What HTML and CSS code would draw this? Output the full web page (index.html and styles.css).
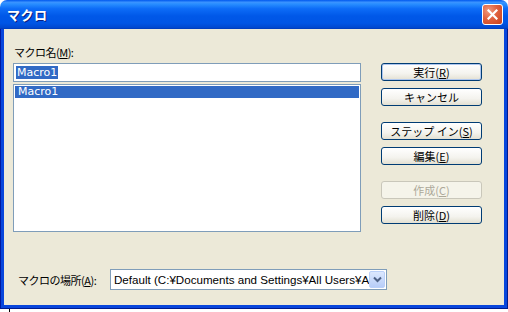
FILE: index.html
```html
<!DOCTYPE html>
<html lang="ja">
<head>
    <meta charset="UTF-8">
    <title>マクロ</title>
    <link rel="stylesheet" href="styles.css">
</head>
<body>
    <div class="window">
        <div class="titlebar">
            <span class="title">マクロ</span>
            <button class="close-btn" aria-label="閉じる">
                <svg width="11" height="11" viewBox="0 0 11 11">
                    <path d="M1.5 1.5 L9.5 9.5 M9.5 1.5 L1.5 9.5" stroke="#fff" stroke-width="2.2" stroke-linecap="square"/>
                </svg>
            </button>
        </div>
        <div class="frame">
            <div class="client">
                <div class="main">
                    <div class="left-col">
                        <div class="label">マクロ名(<u>M</u>):</div>
                        <div class="textbox"><span class="sel">Macro1</span></div>
                        <div class="listbox">
                            <div class="list-item selected">Macro1</div>
                        </div>
                    </div>
                    <div class="right-col">
                        <button class="btn default">実行(<u>R</u>)</button>
                        <button class="btn">キャンセル</button>
                        <button class="btn group">ステップ イン(<u>S</u>)</button>
                        <button class="btn">編集(<u>E</u>)</button>
                        <button class="btn group" disabled>作成(<u>C</u>)</button>
                        <button class="btn">削除(<u>D</u>)</button>
                    </div>
                </div>
                <div class="bottom-row">
                    <div class="label place">マクロの場所(<u>A</u>):</div>
                    <div class="combo">
                        <span class="combo-text">Default (C:¥Documents and Settings¥All Users¥A</span>
                        <span class="combo-arrow">
                            <svg width="9" height="7" viewBox="0 0 9 7">
                                <path d="M1 1.5 L4.5 5 L8 1.5" fill="none" stroke="#4d6185" stroke-width="2"/>
                            </svg>
                        </span>
                    </div>
                </div>
            </div>
        </div>
    </div>
    <div class="desktop"><span class="tick"></span></div>
</body>
</html>
```

FILE: styles.css
```css
body {
    margin: 0;
    background: #ffffff;
    font-family: "Noto Sans CJK JP", "DejaVu Sans", sans-serif;
    font-size: 12px;
    color: #000;
    width: 508px;
    height: 312px;
    overflow: hidden;
}

.window {
    width: 508px;
    height: 309px;
    display: flex;
    flex-direction: column;
}

/* Title bar */
.titlebar {
    height: 29px;
    box-sizing: border-box;
    border-radius: 7px 7px 0 0;
    background: linear-gradient(to bottom,
        #0058ee 0%,
        #3a93ff 8%,
        #288eff 14%,
        #0d6cf7 30%,
        #0058e8 55%,
        #0055e5 80%,
        #0048d0 95%,
        #0039b6 100%);
    display: flex;
    align-items: center;
    justify-content: space-between;
    padding: 0 5px 0 7px;
}

.title {
    color: #fff;
    font-weight: bold;
    font-size: 13px;
    letter-spacing: 0.5px;
    text-shadow: 1px 1px 0 #0a1e80;
}

.close-btn {
    width: 21px;
    height: 21px;
    padding: 0;
    border: 1px solid #fff;
    border-radius: 3px;
    background: radial-gradient(circle at 30% 30%, #f19a7f 0%, #e0613f 45%, #c8401a 100%);
    display: flex;
    align-items: center;
    justify-content: center;
}

/* Frame */
.frame {
    flex: 1;
    display: flex;
    background: #0846dc;
    border-left: 1px solid #0019a0;
    border-right: 1px solid #001b8f;
    border-bottom: 1px solid #001b8f;
    padding: 0 3px 3px 3px;
}

.client {
    flex: 1;
    background: #ece9d8;
    display: flex;
    flex-direction: column;
    padding: 16px 0 0 9px;
}

.main {
    display: flex;
}

.left-col {
    width: 348px;
    display: flex;
    flex-direction: column;
}

.label {
    height: 14px;
    line-height: 14px;
    padding-left: 1px;
    margin-bottom: 4px;
    white-space: nowrap;
    font-size: 11px;
    letter-spacing: -0.5px;
}

.textbox {
    height: 19px;
    box-sizing: border-box;
    border: 1px solid #7f9db9;
    background: #fff;
    padding: 2px 0 0 2px;
    font-family: "DejaVu Sans", sans-serif;
    font-size: 11px;
    line-height: 13px;
}

.sel {
    background: #316ac5;
    color: #fff;
    padding: 0 1px;
}

.listbox {
    margin-top: 2px;
    height: 148px;
    box-sizing: border-box;
    border: 1px solid #7f9db9;
    background: #fff;
    padding: 1px;
}

.list-item {
    height: 12px;
    line-height: 12px;
    padding-left: 3px;
    font-family: "DejaVu Sans", sans-serif;
    font-size: 11px;
}

.list-item.selected {
    background: #316ac5;
    color: #fff;
}

/* Buttons */
.right-col {
    margin-left: 20px;
    margin-top: 18px;
    display: flex;
    flex-direction: column;
    gap: 7px;
}

.btn {
    width: 101px;
    height: 18px;
    padding: 0;
    box-sizing: border-box;
    border: 1px solid #003c74;
    border-radius: 3px;
    background: linear-gradient(to bottom, #ffffff 0%, #f4f3ee 60%, #e3e0d2 100%);
    font-family: "Noto Sans CJK JP", sans-serif;
    font-size: 11px;
    line-height: 15px;
    color: #000;
}

.btn.default {
    box-shadow: inset 0 0 0 1px #aec6ee;
}

.btn.group {
    margin-top: 9px;
}

.btn:disabled {
    border-color: #c9c7ba;
    background: #f5f4ea;
    color: #aca899;
}

/* Bottom row */
.bottom-row {
    display: flex;
    align-items: center;
    margin-top: 37px;
}

.place {
    width: 92px;
    margin: 0 0 0 4px;
}

.combo {
    width: 277px;
    height: 21px;
    box-sizing: border-box;
    border: 1px solid #7f9db9;
    background: #fff;
    display: flex;
    align-items: center;
    padding: 1px;
}

.combo-text {
    flex: 1;
    overflow: hidden;
    white-space: nowrap;
    padding-left: 2px;
    font-family: "Liberation Sans", sans-serif;
    font-size: 11.6px;
}

.combo-arrow {
    width: 16px;
    height: 17px;
    box-sizing: border-box;
    border: 1px solid #bad0f9;
    border-radius: 2px;
    background: linear-gradient(to bottom, #dce8fe, #b7cdf8);
    display: flex;
    align-items: center;
    justify-content: center;
}

.desktop {
    height: 3px;
    position: relative;
}

.tick {
    position: absolute;
    left: 9px;
    top: 0;
    width: 1px;
    height: 3px;
    background: #000;
}
```
